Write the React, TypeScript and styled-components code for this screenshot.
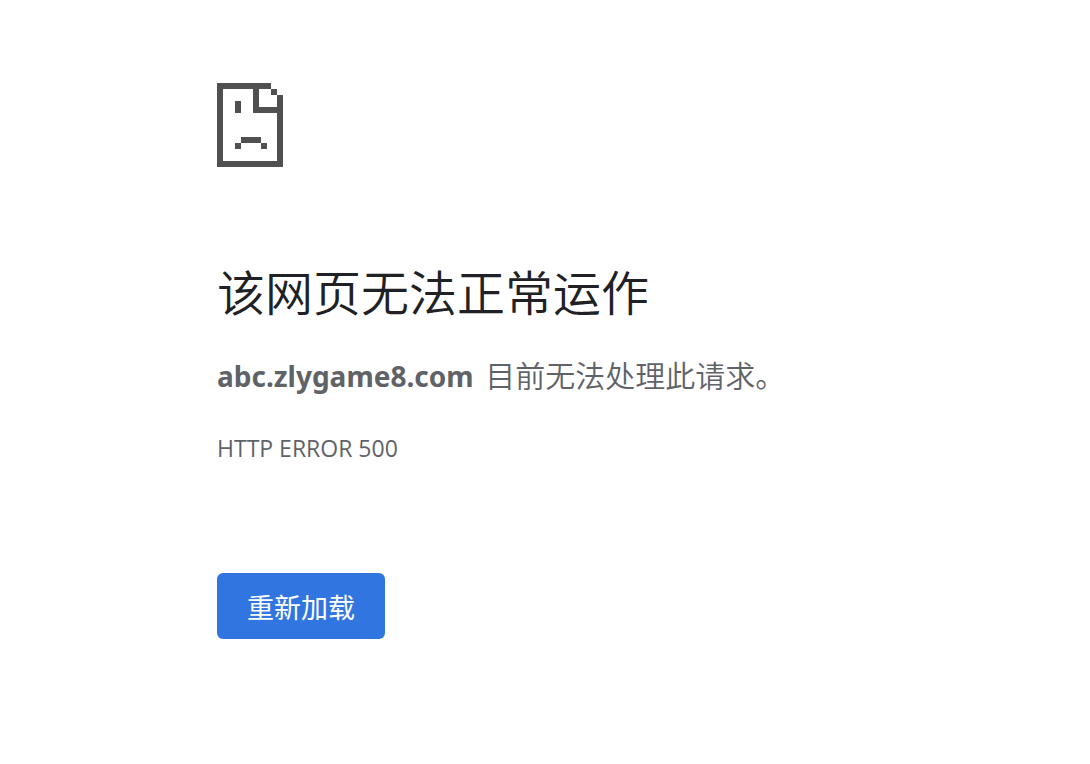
import React from "react";
import styled, { createGlobalStyle } from "styled-components";

const GlobalStyle = createGlobalStyle`
  body {
    margin: 0;
    background: #fff;
    color: #5f6368;
    font-family: "Open Sans", "Noto Sans CJK SC", sans-serif;
  }
`;

const Page = styled.main`
  box-sizing: border-box;
  max-width: 1090px;
  padding: 83px 20% 48px 217px;
`;

const SadPage = styled.svg`
  display: block;
  width: 66px;
  height: 84px;
  fill: #505050;
`;

const Title = styled.h1`
  margin: 90px 0 0;
  color: #202124;
  font-size: 48px;
  font-weight: 350;
  line-height: 72px;
`;

const Message = styled.p`
  margin: 23px 0 0;
  font-size: 30px;
  font-weight: 350;
  line-height: 48px;
`;

const Host = styled.strong`
  margin-right: 4px;
  font-family: "Noto Sans", sans-serif;
  font-size: 28px;
  font-weight: 700;
`;

const ErrorCode = styled.p`
  margin: 30px 0 0;
  font-size: 23px;
  line-height: 36px;
`;

const ReloadButton = styled.button`
  display: block;
  margin-top: 107px;
  padding: 4px 30px 0;
  height: 66px;
  border: 0;
  border-radius: 6px;
  background: #3175e0;
  color: #fff;
  font-family: inherit;
  font-size: 27px;
  line-height: 36px;
  cursor: pointer;
`;

export default function App() {
  return (
    <>
      <GlobalStyle />
      <Page>
        <SadPage viewBox="0 0 66 84" shapeRendering="crispEdges" aria-hidden="true">
          <path d="M0 0H54V6H42V24H60V12H66V84H0ZM6 6V78H60V30H36V6Z" fillRule="evenodd" />
          <path d="M54 6H60V12H54ZM18 18H24V30H18ZM24 54H44V60H24ZM18 60H24V66H18ZM44 60H50V66H44Z" />
        </SadPage>
        <Title>该网页无法正常运作</Title>
        <Message>
          <Host>abc.zlygame8.com</Host> 目前无法处理此请求。
        </Message>
        <ErrorCode>HTTP ERROR 500</ErrorCode>
        <ReloadButton type="button">重新加载</ReloadButton>
      </Page>
    </>
  );
}
